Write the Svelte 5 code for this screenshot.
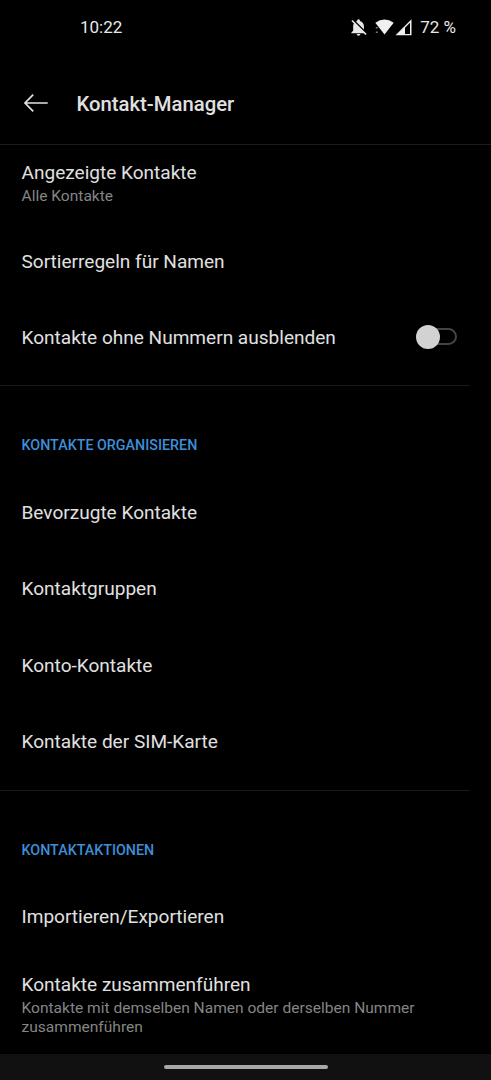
<script>
  const organise = ['Bevorzugte Kontakte', 'Kontaktgruppen', 'Konto-Kontakte', 'Kontakte der SIM-Karte'];
</script>

<div class="screen">
  <div class="status">
    <span class="time">10:22</span>
    <span class="icons">
      <svg class="bell" width="16" height="17" viewBox="3.6 2.3 17.8 19.9" preserveAspectRatio="none">
        <path fill="#e8e8e8" d="M20 18.69L7.84 6.14 5.27 3.49 4 4.76l2.8 2.8v.01c-.52.99-.8 2.16-.8 3.42v5l-2 2v1h13.73l2 2L21 19.72l-1-1.03zM12 22c1.11 0 2-.89 2-2h-4c0 1.11.89 2 2 2zm6-7.32V11c0-3.08-1.64-5.64-4.5-6.32V4c0-.83-.67-1.5-1.5-1.5s-1.5.67-1.5 1.5v.68c-.5.1-1 .32-1.44.56L18 14.68z" />
      </svg>
      <svg class="wifi" width="19" height="16" viewBox="0 0 19 16">
        <path fill="#f0f0f0" d="M.3 3.7Q9.5-2.9 18.7 3.7L9.5 15.5z" />
        <path fill="#777" d="M.8 8h2v1.6h-2zM.8 12.5h2v1.6h-2z" />
      </svg>
      <svg class="signal" width="17" height="17" viewBox="0 0 17 17">
        <path fill="#f0f0f0" fill-rule="evenodd" d="M.5 16.3 16.5.3v16zM10 14.9h5V3.7l-5 5z" />
      </svg>
      <span class="battery">72 %</span>
    </span>
  </div>

  <header>
    <svg width="26" height="20" viewBox="0 0 26 20" fill="none" stroke="#e2e2e2" stroke-width="1.7">
      <path d="M10.2 1.7 2 10l8.2 8.3M2 10h22.7" />
    </svg>
    <h1>Kontakt-Manager</h1>
  </header>

  <main>
    <section class="first">
      <div class="row displayed">
        <span class="label">Angezeigte Kontakte</span>
        <span class="sub">Alle Kontakte</span>
      </div>
      <div class="row"><span class="label">Sortierregeln für Namen</span></div>
      <div class="row toggle">
        <span class="label">Kontakte ohne Nummern ausblenden</span>
        <span class="switch"><span class="knob"></span><span class="track"></span></span>
      </div>
    </section>

    <section class="organise">
      <h2>KONTAKTE ORGANISIEREN</h2>
      {#each organise as item}
        <div class="row"><span class="label">{item}</span></div>
      {/each}
    </section>

    <section class="actions">
      <h2>KONTAKTAKTIONEN</h2>
      <div class="row"><span class="label">Importieren/Exportieren</span></div>
      <div class="row merge">
        <span class="label">Kontakte zusammenführen</span>
        <span class="sub">Kontakte mit demselben Namen oder derselben Nummer zusammenführen</span>
      </div>
    </section>
  </main>

  <footer><span class="pill"></span></footer>
</div>

<style>
  :global(body) { margin: 0; background: #000; }
  .screen {
    width: 491px; height: 1080px; overflow: hidden; background: #000; color: #e0e0e0;
    font-family: Roboto, sans-serif; display: flex; flex-direction: column;
  }
  .status {
    height: 54px; flex: none; display: flex; align-items: center; justify-content: space-between;
    padding: 0 35px 0 80px; box-sizing: border-box; font-size: 17px; line-height: 20px; color: #e8e8e8;
  }
  .icons { display: flex; align-items: center; }
  .bell { margin-top: 1px; }
  .wifi { margin-left: 8px; }
  .signal { margin-left: 1px; }
  .battery { margin-left: 8px; }
  svg { display: block; flex: none; }
  header {
    height: 91px; flex: none; box-sizing: border-box; border-bottom: 1px solid #1c1c1c;
    display: flex; align-items: center; padding: 8px 0 0 23px;
  }
  h1 { margin: 2px 0 0 27.5px; font-size: 20.3px; line-height: 24px; font-weight: 500; }
  main { flex: 1; min-height: 0; overflow: hidden; }
  section { box-sizing: border-box; width: 470px; }
  .first { height: 241px; border-bottom: 1px solid #1a1a1a; }
  .organise { height: 405px; border-bottom: 1px solid #1a1a1a; }
  h2 {
    height: 88.8px; margin: 0; box-sizing: border-box; padding: 49px 0 0 21.5px;
    font-size: 14.3px; line-height: 20px; font-weight: 500; color: #3d8fd9;
  }
  .actions h2 { height: 88px; }
  .row {
    height: 76.4px; box-sizing: border-box; padding: 0 13px 0 21.5px;
    display: flex; flex-direction: column; justify-content: center;
  }
  .label { font-size: 19.06px; line-height: 24px; }
  .sub { font-size: 15.55px; line-height: 19px; color: #858585; }
  .displayed { height: 78px; justify-content: flex-start; padding-top: 15.5px; }
  .displayed .sub, .merge .sub { margin-top: 2px; }
  .first .row:not(.displayed):not(.toggle) { padding-top: 1px; }
  .toggle { flex-direction: row; align-items: center; justify-content: space-between; }
  .switch { display: flex; align-items: center; margin-bottom: 2px; }
  .knob { width: 24px; height: 24px; border-radius: 50%; background: #d2d2d2; z-index: 1; }
  .track {
    width: 37px; height: 17px; margin-left: -20px; box-sizing: border-box;
    border: 2px solid #444; border-radius: 9px;
  }
  .merge { height: 98px; justify-content: flex-start; padding-top: 17.5px; }
  footer { height: 26px; flex: none; background: #111; display: flex; justify-content: center; align-items: center; }
  .pill { width: 164px; height: 4px; border-radius: 2px; background: #a8a8a8; }
</style>
